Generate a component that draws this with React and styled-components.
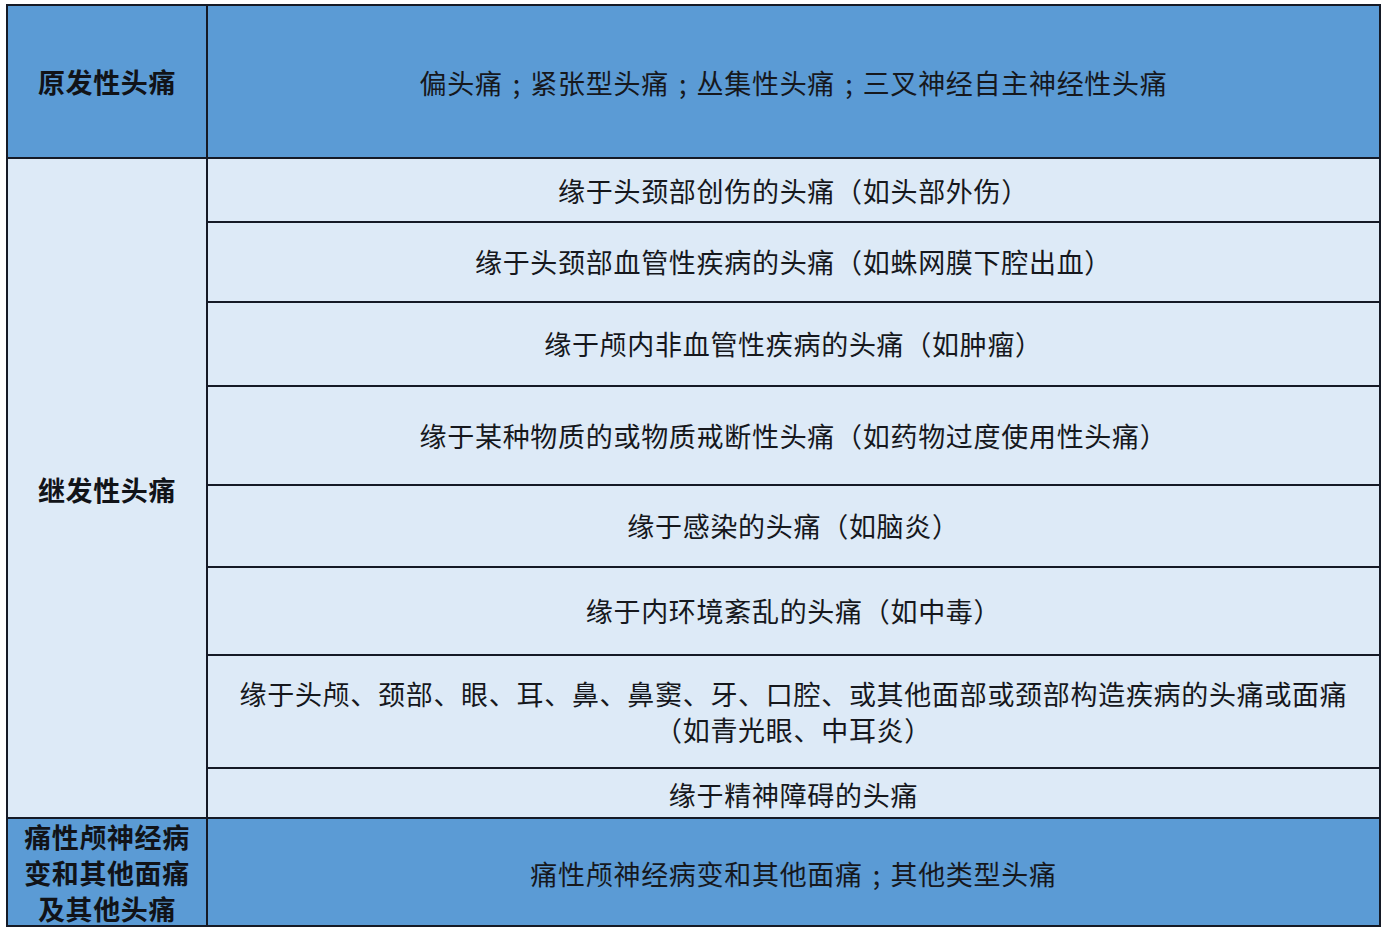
import React from 'react';
import styled, { createGlobalStyle } from 'styled-components';

const GlobalStyle = createGlobalStyle`
  html, body {
    margin: 0;
    padding: 0;
    background: #ffffff;
  }
  body {
    font-family: "Noto Sans CJK SC", "Noto Sans", sans-serif;
    color: #16181d;
  }
`;

const Page = styled.div`
  width: 1388px;
  height: 936px;
  padding: 4px 0 0 6px;
  box-sizing: border-box;
  overflow: hidden;
`;

const Grid = styled.div`
  display: grid;
  width: 1375px;
  box-sizing: border-box;
  grid-template-columns: 198px 1171px;
  grid-template-rows: 151px 62px 78px 82px 97px 80px 86px 111px 48px 106px;
  gap: 2px;
  padding: 2px;
  background: #151a26;
`;

const Cell = styled.div`
  display: flex;
  flex-direction: column;
  align-items: center;
  justify-content: ${props => props.$align || 'center'};
  padding-top: ${props => props.$pt || '0'};
  box-sizing: border-box;
  background: ${props => (props.$dark ? '#5b9bd5' : '#ddeaf7')};
  grid-row: ${props => props.$row || 'auto'};
  font-size: 27px;
  letter-spacing: 0.7px;
  line-height: ${props => props.$lh || '36px'};
  text-align: center;
  white-space: nowrap;
  overflow: visible;
`;

const Label = styled(Cell)`
  font-weight: 700;
  letter-spacing: 0.6px;
  color: #111318;
`;

const Line = styled.span`
  display: block;
`;

// full-width semicolon drawn centred in its cell, as in the source table
const Semi = styled.span`
  display: inline-block;
  width: 27.7px;
  text-align: center;
  letter-spacing: 0;
`;

const secondary = [
  { text: '缘于头颈部创伤的头痛（如头部外伤）', pt: '1px' },
  { text: '缘于头颈部血管性疾病的头痛（如蛛网膜下腔出血）' },
  { text: '缘于颅内非血管性疾病的头痛（如肿瘤）' },
  { text: '缘于某种物质的或物质戒断性头痛（如药物过度使用性头痛）' },
  { text: '缘于感染的头痛（如脑炎）' },
  { text: '缘于内环境紊乱的头痛（如中毒）' },
  {
    lines: [
      '缘于头颅、颈部、眼、耳、鼻、鼻窦、牙、口腔、或其他面部或颈部构造疾病的头痛或面痛',
      '（如青光眼、中耳炎）',
    ],
  },
  { text: '缘于精神障碍的头痛', pt: '3px' },
];

const withSemis = text => {
  const parts = text.split('；');
  return (
    <Line>
      {parts.map((p, i) => (
        <React.Fragment key={i}>
          {i > 0 && <Semi>;</Semi>}
          {p}
        </React.Fragment>
      ))}
    </Line>
  );
};

export default function App() {
  return (
    <>
      <GlobalStyle />
      <Page>
        <Grid>
          <Label $dark>原发性头痛</Label>
          <Cell $dark $pt="2px">{withSemis('偏头痛；紧张型头痛；丛集性头痛；三叉神经自主神经性头痛')}</Cell>

          <Label $row="2 / span 8" $pt="4px">继发性头痛</Label>
          {secondary.map((item, i) => (
            <Cell key={i} $pt={item.pt}>
              {item.lines ? item.lines.map(l => <Line key={l}>{l}</Line>) : item.text}
            </Cell>
          ))}

          <Label $dark $align="flex-start" $lh="36px">
            <Line>痛性颅神经病</Line>
            <Line>变和其他面痛</Line>
            <Line>及其他头痛</Line>
          </Label>
          <Cell $dark $pt="4px">{withSemis('痛性颅神经病变和其他面痛；其他类型头痛')}</Cell>
        </Grid>
      </Page>
    </>
  );
}
